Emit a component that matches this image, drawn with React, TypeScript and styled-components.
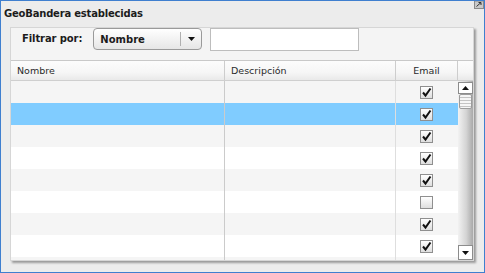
import React from 'react'
import styled, { createGlobalStyle } from 'styled-components'

const GlobalStyle = createGlobalStyle`
  html, body {
    margin: 0;
    padding: 0;
    background: #ececec;
  }
  body {
    font-family: "DejaVu Sans", Verdana, sans-serif;
  }
`

const Window = styled.div`
  box-sizing: border-box;
  width: 485px;
  height: 273px;
  border: 1px solid #3f7fcf;
  background: #ececec;
  display: flex;
  flex-direction: column;
  overflow: hidden;
`

const TitleBar = styled.div`
  height: 26px;
  flex: none;
  display: flex;
  justify-content: space-between;
  align-items: flex-start;
`

const Title = styled.h1`
  margin: 0;
  padding: 6px 0 0 3px;
  font-size: 10px;
  font-weight: bold;
  line-height: 13px;
  color: #1c1c1c;
  letter-spacing: -0.2px;
`

const Panel = styled.div`
  box-sizing: border-box;
  margin-left: 9px;
  width: 464px;
  height: 234px;
  flex: none;
  border: 1px solid #d6d6d6;
  background: #f4f4f4;
  box-shadow: 2px 2px 2px rgba(0, 0, 0, 0.35);
  display: flex;
  flex-direction: column;
`

const Toolbar = styled.div`
  height: 32px;
  flex: none;
  display: flex;
  align-items: flex-start;
  padding-left: 11px;
`

const Label = styled.span`
  height: 22px;
  line-height: 22px;
  font-size: 10px;
  font-weight: bold;
  color: #1c1c1c;
  margin-right: 11px;
  letter-spacing: -0.1px;
`

const Dropdown = styled.div`
  box-sizing: border-box;
  width: 109px;
  height: 22px;
  border: 1px solid #9a9a9a;
  border-radius: 4px;
  background: linear-gradient(#ffffff, #e6e6e6);
  display: flex;
  align-items: center;
  margin-right: 8px;
`

const DropdownText = styled.span`
  flex: 1;
  padding-left: 6px;
  font-size: 10px;
  font-weight: bold;
  color: #1c1c1c;
`

const DropdownArrow = styled.span`
  width: 20px;
  height: 14px;
  border-left: 1px solid #b0b0b0;
  display: flex;
  align-items: center;
  justify-content: center;
`

const SearchInput = styled.input`
  box-sizing: border-box;
  width: 149px;
  height: 23px;
  border: 1px solid #bdbdbd;
  background: #ffffff;
  margin: 0;
  padding: 0 4px;
  outline: none;
`

const HeaderRow = styled.div`
  display: grid;
  grid-template-columns: 214px 171px 62px 15px;
  height: 21px;
  flex: none;
  box-sizing: border-box;
  border-top: 1px solid #c9c9c9;
  border-bottom: 1px solid #cfcfcf;
  background: linear-gradient(#fcfcfc 0%, #f6f6f6 60%, #e9e9e9 100%);
`

const HeaderCell = styled.div<{ $center?: boolean; $last?: boolean }>`
  box-sizing: border-box;
  border-right: ${p => (p.$last ? 'none' : '1px solid #cdcdcd')};
  font-size: 9.5px;
  line-height: 19px;
  color: #2a2a2a;
  padding-left: ${p => (p.$center ? '0' : '6px')};
  text-align: ${p => (p.$center ? 'center' : 'left')};
`

const Body = styled.div`
  flex: 1;
  display: flex;
  overflow: hidden;
`

const Rows = styled.div`
  width: 447px;
  overflow: hidden;
`

const Row = styled.div<{ $bg: string }>`
  display: grid;
  grid-template-columns: 214px 171px 62px;
  height: 22px;
  background: ${p => p.$bg};
`

const Cell = styled.div<{ $line: string }>`
  box-sizing: border-box;
  border-right: 1px solid ${p => p.$line};
  display: flex;
  align-items: center;
  justify-content: center;
`

const Check = styled.span`
  box-sizing: border-box;
  width: 13px;
  height: 13px;
  border: 1px solid #8f8f8f;
  background: linear-gradient(#ffffff, #dedede);
  display: flex;
  align-items: center;
  justify-content: center;
`

const ScrollBar = styled.div`
  width: 15px;
  display: flex;
  flex-direction: column;
  background: linear-gradient(90deg, #f2f2f2 0%, #d4d4d4 55%, #a9a9a9 100%);
`

const ScrollBtn = styled.div<{ $h: number }>`
  box-sizing: border-box;
  height: ${p => p.$h}px;
  margin: 1px 0 0 0;
  border: 1px solid #8c8c8c;
  background: #ffffff;
  display: flex;
  align-items: center;
  justify-content: center;
  flex: none;
`

const Thumb = styled.div`
  box-sizing: border-box;
  height: 15px;
  margin: 0 1px;
  border: 1px solid #9c9c9c;
  border-radius: 2px;
  background: repeating-linear-gradient(#f6f6f6 0px, #f6f6f6 2px, #c4c4c4 2px, #c4c4c4 3px);
  flex: none;
`

const Track = styled.div`
  flex: 1;
`

const Tri = ({ up }: { up?: boolean }) => (
  <svg width="7" height="4" viewBox="0 0 7 4">
    <path d={up ? 'M0 4 L3.5 0 L7 4 Z' : 'M0 0 L7 0 L3.5 4 Z'} fill="#111" />
  </svg>
)

const RestoreIcon = () => (
  <svg width="10" height="8" viewBox="0 0 10 8">
    <rect x="0.5" y="0" width="9" height="7.5" fill="#c9c9c9" stroke="#8a8a8a" />
    <path d="M2.5 5.5 L7 1.5 M4.5 1.5 L7 1.5 L7 4" stroke="#333" fill="none" />
  </svg>
)

const CheckMark = () => (
  <svg width="11" height="11" viewBox="0 0 11 11">
    <path d="M2 5.5 L4.5 8.5 L9.5 1.5" stroke="#111" strokeWidth="2" fill="none" />
  </svg>
)

const rows = [true, true, true, true, true, false, true, true, true]

export default function App() {
  return (
    <>
      <GlobalStyle />
      <Window>
        <TitleBar>
          <Title>GeoBandera establecidas</Title>
          <RestoreIcon />
        </TitleBar>
        <Panel>
          <Toolbar>
            <Label>Filtrar por:</Label>
            <Dropdown>
              <DropdownText>Nombre</DropdownText>
              <DropdownArrow>
                <Tri />
              </DropdownArrow>
            </Dropdown>
            <SearchInput />
          </Toolbar>
          <HeaderRow>
            <HeaderCell>Nombre</HeaderCell>
            <HeaderCell>Descripción</HeaderCell>
            <HeaderCell $center>Email</HeaderCell>
            <HeaderCell $last />
          </HeaderRow>
          <Body>
            <Rows>
              {rows.map((checked, i) => (
                <Row key={i} $bg={i === 1 ? '#80ccff' : i % 2 === 0 ? '#f5f5f5' : '#ffffff'}>
                  <Cell $line="#cbcbcb" />
                  <Cell $line="#dedede" />
                  <Cell $line="transparent">
                    <Check>{checked && <CheckMark />}</Check>
                  </Cell>
                </Row>
              ))}
            </Rows>
            <ScrollBar>
              <ScrollBtn $h={12}>
                <Tri up />
              </ScrollBtn>
              <Thumb />
              <Track />
              <ScrollBtn $h={15}>
                <Tri />
              </ScrollBtn>
            </ScrollBar>
          </Body>
        </Panel>
      </Window>
    </>
  )
}
